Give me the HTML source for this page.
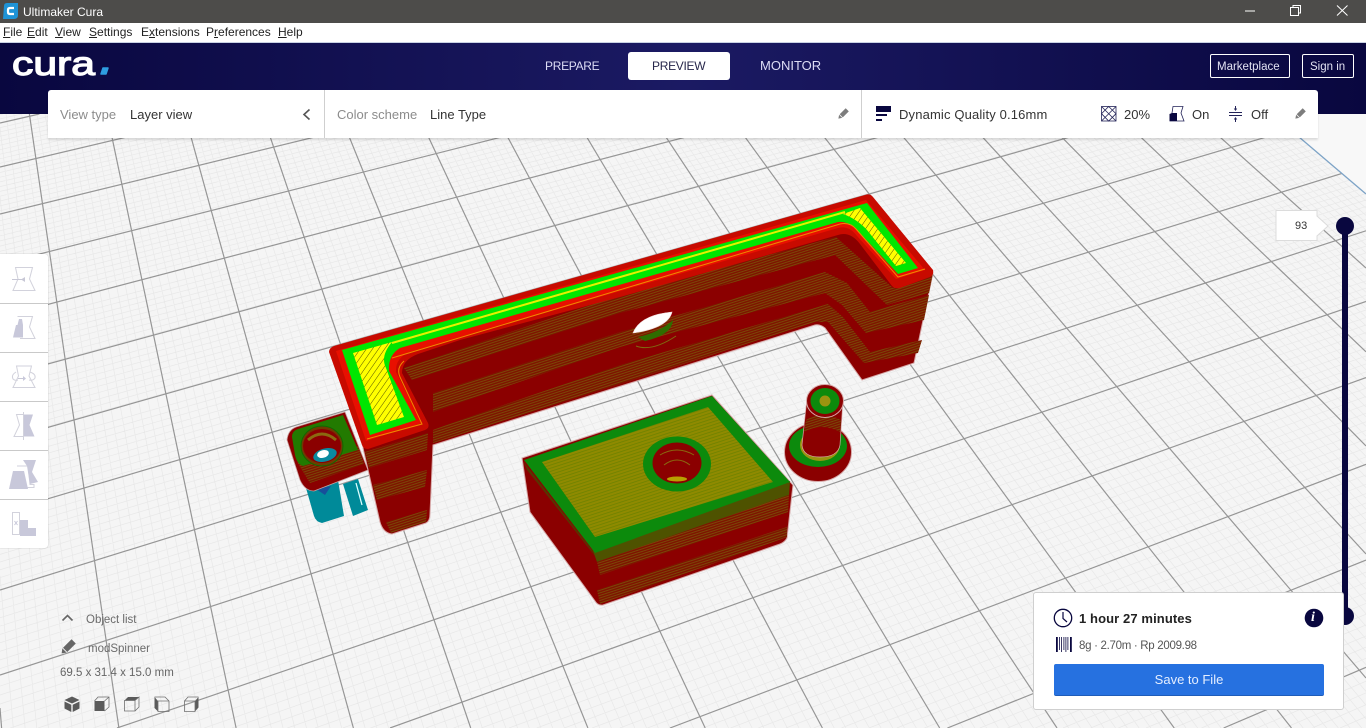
<!DOCTYPE html>
<html lang="en"><head><meta charset="utf-8"><title>Ultimaker Cura</title>
<style>
html,body{margin:0;padding:0;width:1366px;height:728px;overflow:hidden;background:#f6f6f6;font-family:"Liberation Sans",sans-serif}
.t{position:absolute;white-space:nowrap;line-height:16px}
.m{top:24px;font-size:12px;color:#222}
.m u{text-decoration:underline}
svg{position:absolute;overflow:hidden}
</style></head><body>

<svg id="scene" style="left:0;top:0" width="1366" height="728" viewBox="0 0 1366 728">
<defs>
<pattern id="h" width="2.4" height="2.4" patternUnits="userSpaceOnUse" patternTransform="rotate(-18)"><rect width="2.4" height="2.4" fill="#7e1400"/><rect width="2.4" height=".9" fill="#7a4c08"/></pattern>
<pattern id="y" width="5" height="5" patternUnits="userSpaceOnUse" patternTransform="rotate(-55)"><rect width="5" height="5" fill="#ffff00"/><rect width="5" height=".5" fill="#555500"/></pattern>
<pattern id="o" width="3" height="3" patternUnits="userSpaceOnUse" patternTransform="rotate(-18)"><rect width="3" height="3" fill="#8f8a00"/><rect width="3" height=".8" fill="#6d8200"/></pattern>
</defs>
<rect width="1366" height="728" fill="#f5f5f5"/>
<path id="minor" d="" stroke="#e8e8e8" stroke-width=".7" fill="none"/>
<g stroke="#969696" stroke-width="1.2" fill="none">
<path d="M0 708L1.6 728M29.4 114L118.9 728M107.1 114L236.1 728M184.7 114L353.4 728M262.4 114L470.7 728M340 114L587.9 728M417.7 114L705.2 728M495.4 114L822.4 728M573 114L939.7 728M650.7 114L1057 728M728.3 114L1174.2 728M806 114L1291.5 728M883.6 114L1366 678M961.3 114L1366 554M1039 114L1366 446M1116.6 114L1366 351.8M1194.3 114L1366 268"/>
<path d="M0 123L39.4 114M0 167L224.6 114M0 214L409 114M0 264L592.6 114M0 317L773.6 114M0 377L963.7 114M0 441L1151 114M0 513L1344 114M0 590L1366 166M0 675L1366 230.8M117 728L1366 301.5M390 728L1366 377.6M670 728L1366 464.3M947.400 728L1366 560.1M1223.600 728L1366 667.3"/>
</g>
<polygon points="1272,114 1366,114 1366,194" fill="#f8f8f8"/>
<path d="M1272 114L1366 194" stroke="#7da3c6" stroke-width="1.3" fill="none"/>

<!-- teal supports -->
<g fill="#008a99">
<path d="M306 488L338 480L344 516L322 523Q316 522 314 516Z"/>
<path d="M343 484L358 479L368 510L353 516Z"/>
</g>
<path d="M316 489L331 486L325 495Z" fill="#174f9a"/>
<path d="M356 483L362 505" stroke="#dff" stroke-width="1.3"/>

<!-- tab -->
<path d="M287 440Q288 430 296 427L345 412L368 470L314 491Q305 491 300 480Z" fill="#8b0000" stroke="#c9a0a0" stroke-width=".8"/>
<path d="M297 462L358 446L364 464L310 483Z" fill="url(#h)"/>
<path d="M292 437Q292 431 298 429L343 415L358 450L303 466Q297 464 295 455Z" fill="#227a00"/>
<ellipse cx="322" cy="446" rx="21" ry="20" fill="#6f3a00" stroke="#0f6a00" stroke-width="1"/>
<ellipse cx="322" cy="446" rx="19" ry="17" fill="#8b0000"/>
<path d="M308 440Q322 428 336 440" stroke="#8a6a10" fill="none" stroke-width="3"/>
<ellipse cx="325" cy="455" rx="12" ry="6.5" fill="#0a8aa0" transform="rotate(-15 325 455)"/>
<ellipse cx="323" cy="454" rx="6" ry="3.8" fill="#fff" transform="rotate(-15 323 454)"/>

<!-- bracket body -->
<path d="M363 448L380 522Q383 533 392 534L426 523Q430 521 430 514L433 445L815 325Q820 324 825 328L862 380L914 363L933 273L897 270L850 215L400 340Z" fill="#8b0000" stroke="#d6a8a8" stroke-width="1"/>
<g fill="url(#h)">
<path d="M404 368L620 295L836 237L893 288L933 273L929 293L887 305L835 255L620 313L412 380Z"/>
<path d="M433 393L620 332L825 272L847 283L870 312L929 295L924 320L866 333L842 305L825 293L620 347L433 412Z"/>
<path d="M460 420L620 365L828 304L843 317L870 352L922 340L918 353L864 363L828 322L815 322L620 384L433 443L433 430Z"/>
<path d="M365 452L428 433L427 450L369 468Z"/>
<path d="M373 485L427 470L425 487L377 500Z"/>
<path d="M386 522L427 510L426 522L391 533Z"/>
</g>
<!-- hole -->
<path d="M638 337Q660 332 673 320Q672 335 645 341Z" fill="#2f6d00"/>
<path d="M633 333Q640 315 672 312Q668 328 633 333Z" fill="#fff" stroke="#f4dede" stroke-width=".6"/>
<path d="M636 346Q652 352 676 336" stroke="#7f6a10" fill="none"/>

<!-- bracket top -->
<path d="M329 352Q329 348 334 346L865 195Q870 193 873 197L933 270Q934 275 930 277L900 288Q895 289 892 286L860 244Q850 231 838 235L620 297L460 340L418 354Q402 360 402 373L428 423Q430 428 425 430L368 449Q363 449 362 445Z" fill="#c80a00"/>
<path d="M336 351L866 200L925 270L896 279L857 236Q849 225 838 228L410 352Q395 358 396 372L422 423L366 441Z" fill="#e81000"/>
<path d="M342 350L867 203L918 268L898 274L860 233Q850 221 838 222L400 348Q388 355 389 371L416 420L370 435Z" fill="#00e600"/>
<path d="M353 353L392 342Q380 356 386 368L404 417L377 425Z" fill="url(#y)"/>
<path d="M843 214L860 208L906 263L896 266L867 230Q857 219 843 214Z" fill="url(#y)"/>
<path d="M392 343L845 212" stroke="#e6f000" stroke-width="2" fill="none"/>
<path d="M392 358L840 224Q850 222 856 229L898 277L925 269M404 361Q396 368 400 377L422 424L367 439" stroke="#ef8a00" stroke-width="1" fill="none"/>

<!-- box -->
<path d="M522 458L712 395L793 485L787 538Q785 542 780 544L603 605Q598 606 595 601L530 512Z" fill="#8b0000" stroke="#d6a8a8" stroke-width="1"/>
<path d="M524 462L592 550L595 556L527 470Z" fill="#5a3400"/>
<path d="M592 548L790 481L789 495L597 562Z" fill="#4e5200"/>
<path d="M597 562L789 495L788 512L600 575Z" fill="url(#h)"/>
<path d="M597 590L787 527L787 537L600 604Z" fill="url(#h)"/>
<path d="M524 460L712 396L790 482L595 553Z" fill="#0c8a0c"/>
<path d="M542 462L708 407L773 482L595 537Z" fill="url(#o)"/>
<ellipse cx="677" cy="464" rx="34" ry="27.5" fill="#0c8a0c"/>
<ellipse cx="677" cy="463" rx="24.5" ry="20.5" fill="#8b0000"/>
<path d="M660 455Q677 445 694 455M664 465Q677 455 690 465" stroke="#8a6a10" fill="none"/>
<ellipse cx="677" cy="479" rx="10" ry="2.5" fill="#b8a000"/>

<!-- peg -->
<ellipse cx="818" cy="452" rx="33.5" ry="29.5" fill="#8b0000" stroke="#d6a8a8"/>
<ellipse cx="818" cy="446" rx="29" ry="21" fill="#0c8a0c"/>
<ellipse cx="820" cy="445" rx="20" ry="16" fill="#9a9410"/>
<path d="M807 398L802 445Q803 457 820 457Q838 457 840 445L843 400Z" fill="#8b0000" stroke="#d6a8a8" stroke-width=".7"/>
<path d="M806 420Q822 410 841 420L840 432Q822 422 804 432Z" fill="url(#h)"/>
<ellipse cx="825" cy="401" rx="18.5" ry="16.5" fill="#8b0000" stroke="#d6a8a8"/>
<ellipse cx="825" cy="401" rx="14.5" ry="13" fill="#0c8a0c"/>
<ellipse cx="825" cy="401" rx="5.5" ry="5.5" fill="#9a9410"/>
</svg>

<!-- title bar -->
<div style="position:absolute;left:0;top:0;width:1366px;height:23px;background:#4d4c4a"></div>
<div style="position:absolute;left:0;top:23px;width:1366px;height:19px;background:#fff"></div>
<svg style="left:0;top:0" width="1366" height="24">
<path d="M4 6Q4 3 7 3H18V15Q18 19 14 19H3Z" fill="#1f93d6"/>
<path d="M14 8H10Q8 8 8 10V12Q8 14 10 14H14" stroke="#fff" stroke-width="2.2" fill="none"/>
<path d="M1245 11H1255" stroke="#fff" stroke-width="1"/>
<path d="M1290.5 7.5H1298.5V15.5H1290.5ZM1293 7.5V5.5H1300.5V13H1298.5" stroke="#fff" stroke-width="1" fill="none"/>
<path d="M1337 5.5L1347.5 15.5M1347.5 5.5L1337 15.5" stroke="#fff" stroke-width="1"/>
</svg>
<div class="t" style="left:23px;top:4px;font-size:12px;color:#fff">Ultimaker Cura</div>
<div class="t m" style="left:3px"><u>F</u>ile</div>
<div class="t m" style="left:27px"><u>E</u>dit</div>
<div class="t m" style="left:55px"><u>V</u>iew</div>
<div class="t m" style="left:89px"><u>S</u>ettings</div>
<div class="t m" style="left:141px">E<u>x</u>tensions</div>
<div class="t m" style="left:206px">P<u>r</u>eferences</div>
<div class="t m" style="left:278px"><u>H</u>elp</div>

<!-- header -->
<div style="position:absolute;left:0;top:42px;width:1366px;height:72px;background:linear-gradient(90deg,#09073f 0%,#1b1a63 50%,#09073f 100%);border-top:1px solid #c9d2e4;box-sizing:border-box"></div>
<svg style="left:0;top:42px" width="120" height="50">
<text x="12" y="33" font-family="Liberation Sans" font-size="33" fill="#fff" stroke="#fff" stroke-width="1.2" textLength="83" lengthAdjust="spacingAndGlyphs">cura</text>
<path d="M103 26H108L106 32H101Z" fill="#2e9de0" stroke="#2e9de0" stroke-width="1.5" stroke-linejoin="round"/>
</svg>
<div class="t" style="left:545px;top:58px;font-size:12px;letter-spacing:-.3px;color:#dcdcf5">PREPARE</div>
<div style="position:absolute;left:628px;top:52px;width:102px;height:28px;background:#fff;border-radius:3px"></div>
<div class="t" style="left:652px;top:58px;font-size:12px;letter-spacing:-.3px;color:#26264a">PREVIEW</div>
<div class="t" style="left:760px;top:58px;font-size:13px;color:#dcdcf5">MONITOR</div>
<div style="position:absolute;left:1210px;top:54px;width:80px;height:24px;border:1px solid #fff;border-radius:2px;box-sizing:border-box"></div>
<div class="t" style="left:1217px;top:59px;font-size:11.5px;color:#e2e2f2">Marketplace</div>
<div style="position:absolute;left:1302px;top:54px;width:52px;height:24px;border:1px solid #fff;border-radius:2px;box-sizing:border-box"></div>
<div class="t" style="left:1310px;top:59px;font-size:11.5px;color:#e2e2f2">Sign in</div>

<!-- settings panel -->
<div style="position:absolute;left:48px;top:90px;width:1270px;height:48px;background:#fff;border-radius:3px 3px 0 0;box-shadow:0 2px 2px rgba(0,0,0,.12)"></div>
<div style="position:absolute;left:324px;top:90px;width:1px;height:48px;background:#cfcfcf"></div>
<div style="position:absolute;left:861px;top:90px;width:1px;height:48px;background:#cfcfcf"></div>
<div class="t" style="left:60px;top:107px;font-size:13px;color:#8c8c8c">View type</div>
<div class="t" style="left:130px;top:107px;font-size:13px;color:#333">Layer view</div>
<div class="t" style="left:337px;top:107px;font-size:13px;color:#8c8c8c">Color scheme</div>
<div class="t" style="left:430px;top:107px;font-size:13px;color:#333">Line Type</div>
<div class="t" style="left:899px;top:107px;font-size:13px;letter-spacing:.15px;color:#333">Dynamic Quality 0.16mm</div>
<div class="t" style="left:1124px;top:107px;font-size:13px;color:#333">20%</div>
<div class="t" style="left:1192px;top:107px;font-size:13px;color:#333">On</div>
<div class="t" style="left:1251px;top:107px;font-size:13px;color:#333">Off</div>
<svg style="left:0;top:0" width="1366" height="140">
<path d="M309.5 109.5L304 114.5L309.5 119.5" stroke="#555" stroke-width="1.6" fill="none"/>
<g fill="#7d7d7d">
<g transform="translate(843,114) rotate(45)"><rect x="-2.2" y="-6" width="4.4" height="8.5"/><path d="M-2.2 3.3H2.2L0 6.5Z"/></g>
<g transform="translate(1300,114) rotate(45)"><rect x="-2.2" y="-6" width="4.4" height="8.5"/><path d="M-2.2 3.3H2.2L0 6.5Z"/></g>
</g>
<g fill="#09073f">
<rect x="876" y="106" width="15" height="6"/><rect x="876" y="114" width="11" height="2"/><rect x="876" y="119" width="6" height="2"/>
</g>
<g stroke="#232358" fill="none" stroke-width=".8">
<rect x="1101.5" y="106.5" width="14.5" height="14.5"/>
<path d="M1101.5 106.5L1116 121M1116 106.5L1101.5 121M1108.7 106.5L1116 113.7L1108.7 121L1101.5 113.7Z"/>
<path d="M1173 106.5H1183L1181 113L1184 121H1170L1172 113Z"/>
</g>
<path d="M1172 113H1177V121H1169.500V114Z" fill="#09073f"/>
<g stroke="#232358" fill="#232358" stroke-width="1">
<path d="M1229 112.500H1242M1229 115.500H1242" fill="none"/>
<path d="M1235.500 106V110M1235.500 118V122" fill="none"/>
<path d="M1233.800 108.500H1237.200L1235.500 111ZM1233.800 119.500H1237.200L1235.500 117Z" stroke="none"/>
</g>
</svg>

<!-- slider -->
<svg style="left:0;top:0" width="1366" height="728">
<rect x="1342" y="226" width="6" height="390" fill="#09073f"/>
<circle cx="1345" cy="226" r="9" fill="#09073f"/>
<circle cx="1345" cy="616" r="9" fill="#09073f"/>
<path d="M1276 210.500H1317V216L1328 226L1317 236V240.500H1276Z" fill="#fff" stroke="#dcdcdc"/>
</svg>
<div class="t" style="left:1295px;top:218px;font-size:11px;color:#333">93</div>

<!-- left toolbar -->
<div style="position:absolute;left:0;top:254px;width:48px;height:294px;background:#fff;border-radius:0 3px 3px 0;box-shadow:0 0 1px rgba(0,0,0,.35)"></div>
<div style="position:absolute;left:0;top:303px;width:48px;height:1px;background:#c9c9c9"></div>
<div style="position:absolute;left:0;top:352px;width:48px;height:1px;background:#c9c9c9"></div>
<div style="position:absolute;left:0;top:401px;width:48px;height:1px;background:#c9c9c9"></div>
<div style="position:absolute;left:0;top:450px;width:48px;height:1px;background:#c9c9c9"></div>
<div style="position:absolute;left:0;top:499px;width:48px;height:1px;background:#c9c9c9"></div>
<svg style="left:0;top:0" width="48" height="548">
<g stroke="#d2d2dc" fill="none" stroke-width="1">
<path d="M15.500 267.500H32.500L29.500 279L35 290.500H13L18 279Z"/>
<path d="M12 279.500H22" stroke="#c8c8d6"/>
<path d="M17.500 316.500H32.500L29.500 327L35 338.500H20"/>
<path d="M16.500 366H31.500L29 376L35 387.500H13L18.500 376Z"/>
<path d="M16 372Q11 375 13 379Q15 381 18 380M30 372Q36 374 35 378Q33 381 29 380"/>
<path d="M18 378.500H23" stroke="#c8c8d6"/>
<path d="M23 414.500H16.500L19.500 425L14 436.500H24"/>
<path d="M23.500 412V440"/>
<path d="M17 466H28L30 484.500H34V487.500H16"/>
<rect x="12.500" y="512.500" width="7" height="22"/>
</g>
<g fill="#c8c8da">
<path d="M16 325H23V337.500H13Z"/><path d="M17.500 325L19 319H22L23 325Z"/>
<path d="M23 376L26 378.500L23 381Z"/>
<path d="M24 414.500H33L29.500 425L34.500 436.500H24Z"/>
<path d="M13 471H24L28 489H9Z"/>
<path d="M23 460H36L32 472L38 482L30 484L27 466Z"/>
<path d="M20 520H28V528H36V536H20Z"/>
<path d="M14.500 521L17.500 525M17.500 521L14.500 525" stroke="#c8c8da" fill="none"/>
</g>
<path d="M21 279.500L25 277V282Z" fill="#c8c8d6"/>
</svg>

<!-- object info -->
<svg style="left:0;top:0" width="220" height="728">
<path d="M62.500 620.500L67.500 615.500L72.500 620.500" stroke="#666" stroke-width="1.6" fill="none"/>
<g transform="translate(68,647) rotate(45)" fill="#666"><rect x="-3" y="-8" width="6" height="12"/><path d="M-3 5H3L0 9Z"/></g>
<g fill="#5a5a5a">
<path d="M72 696.500L79.500 700L72 703.500L64.500 700Z"/><path d="M64.500 701.500L71.300 704.700V712L64.500 708.500Z"/><path d="M79.500 701.500L72.700 704.700V712L79.500 708.500Z"/>
<rect x="94.500" y="701" width="10" height="10"/>
<path d="M124.500 700.500L128 697H139L135 700.500Z"/>
<path d="M154.500 697L158 701V711.500L154.500 708Z"/>
<path d="M195 701L198.500 697V707.500L195 711.500Z"/>
</g>
<g stroke="#707070" fill="none" stroke-width=".8">
<path d="M94.500 701L98 697H109V707L104.500 711M104.500 701L109 697"/>
<path d="M124.500 700.500H135V711H124.500ZM135 700.500L139 697V707L135 711"/>
<path d="M154.500 697H165L169 701V711.500H158V701M158 701H169"/>
<path d="M184.500 701L188 697H198.500M184.500 701H195V711.500H184.500Z"/>
</g>
</svg>
<div class="t" style="left:86px;top:612px;font-size:11.5px;color:#6b6b6b">Object list</div>
<div class="t" style="left:88px;top:641px;font-size:11.5px;color:#6b6b6b">modSpinner</div>
<div class="t" style="left:60px;top:665px;font-size:11.5px;color:#666">69.5 x 31.4 x 15.0 mm</div>

<!-- print panel -->
<div style="position:absolute;left:1033px;top:592px;width:311px;height:118px;background:#fff;border:1px solid #cfcfcf;border-radius:3px;box-sizing:border-box"></div>
<svg style="left:0;top:0" width="1366" height="728">
<circle cx="1063" cy="618" r="8.700" stroke="#09073f" stroke-width="1.300" fill="none"/>
<path d="M1063 612V618.500L1067 622" stroke="#09073f" stroke-width="1.200" fill="none"/>
<circle cx="1314" cy="618" r="9.300" fill="#09073f"/>
<g fill="#09073f">
<rect x="1056" y="637" width="1.800" height="15"/><rect x="1059" y="637" width=".8" height="13"/><rect x="1061" y="637" width=".8" height="15"/><rect x="1063.500" y="637" width=".8" height="13"/><rect x="1065.500" y="637" width=".8" height="15"/><rect x="1067.500" y="637" width=".8" height="13"/><rect x="1070" y="637" width="1.800" height="15"/>
</g>
</svg>
<div class="t" style="left:1311px;top:610px;font-size:14px;font-weight:700;font-style:italic;font-family:'Liberation Serif',serif;color:#fff">i</div>
<div class="t" style="left:1079px;top:611px;font-size:13px;font-weight:700;letter-spacing:.1px;color:#222">1 hour 27 minutes</div>
<div class="t" style="left:1079px;top:638px;font-size:11.5px;letter-spacing:-.3px;color:#555">8g · 2.70m · Rp 2009.98</div>
<div style="position:absolute;left:1054px;top:664px;width:270px;height:32px;background:#2671e0;border-bottom:1px solid #1f5cb8;border-radius:2px;box-sizing:border-box"></div>
<div class="t" style="left:1054px;top:672px;width:270px;text-align:center;font-size:13px;color:#e4eeff">Save to File</div>

<script>
(function(){
var d="",i,k,c,m,j;
function seg(x1,y1,x2,y2){
  var t0=0,t1=1,dx=x2-x1,dy=y2-y1,P=[-dx,dx,-dy,dy],Q=[x1,1366-x1,y1-114,728-y1],n,r;
  for(n=0;n<4;n++){
    if(P[n]===0){if(Q[n]<0)return;continue;}
    r=Q[n]/P[n];
    if(P[n]<0){if(r>t0)t0=r;}else{if(r<t1)t1=r;}
  }
  if(t0>=t1)return;
  d+="M"+(x1+t0*dx).toFixed(1)+" "+(y1+t0*dy).toFixed(1)+"L"+(x1+t1*dx).toFixed(1)+" "+(y1+t1*dy).toFixed(1);
}
for(i=-10;i<=160;i++){if(i%10===0)continue;k=.1457+.00645*i;seg(-146+1204*k,114,-146+1818*k,728);}
for(i=-20;i<=140;i++){if(i%10===0)continue;j=i/10;c=1/(.000743-.0000255*j)-1178;m=-.236-.0001754*(c-166.7);seg(0,c,1366,c+m*1366);}
document.getElementById("minor").setAttribute("d",d);
})();
</script>
</body></html>
